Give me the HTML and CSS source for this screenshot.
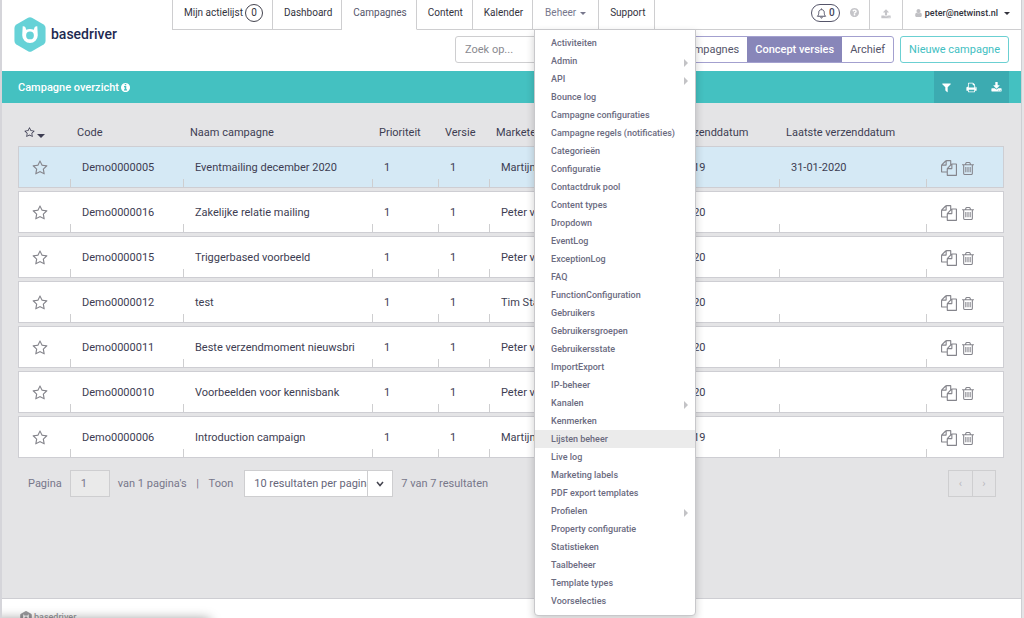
FILE: index.html
```html
<!DOCTYPE html>
<html lang="nl">
<head>
<meta charset="utf-8">
<title>Campagne overzicht - basedriver</title>
<link rel="stylesheet" href="styles.css">
</head>
<body>
<svg class="sprite" aria-hidden="true">
  <symbol id="star" viewBox="0 0 1792 1792"><path d="M1201 1004l306-297-422-62-189-382-189 382-422 62 306 297-73 421 378-199 377 199zm527-357q0 22-26 48l-363 354 86 500q1 7 1 20 0 50-41 50-19 0-40-12l-449-236-449 236q-22 12-40 12-21 0-31.5-14.5t-10.5-35.5q0-6 2-20l86-500-364-354q-25-27-25-48 0-37 56-46l502-73 225-455q19-41 49-41t49 41l225 455 502 73q56 9 56 46z"/></symbol>
  <symbol id="copy" viewBox="0 0 1792 1792"><path d="M1696 384q40 0 68 28t28 68v1216q0 40-28 68t-68 28h-960q-40 0-68-28t-28-68v-288h-544q-40 0-68-28t-28-68v-672q0-40 20-88t48-76l408-408q28-28 76-48t88-20h416q40 0 68 28t28 68v328q68-40 128-40h416zm-544 213l-299 299h299v-299zm-640-384l-299 299h299v-299zm196 647l316-316v-416h-384v416q0 40-28 68t-68 28h-416v640h512v-256q0-40 20-88t48-76zm956 804v-1152h-384v416q0 40-28 68t-68 28h-416v640h896z"/></symbol>
  <symbol id="trash" viewBox="192 128 1408 1536"><path d="M704 736v576q0 14-9 23t-23 9h-64q-14 0-23-9t-9-23v-576q0-14 9-23t23-9h64q14 0 23 9t9 23zm256 0v576q0 14-9 23t-23 9h-64q-14 0-23-9t-9-23v-576q0-14 9-23t23-9h64q14 0 23 9t9 23zm256 0v576q0 14-9 23t-23 9h-64q-14 0-23-9t-9-23v-576q0-14 9-23t23-9h64q14 0 23 9t9 23zm128 724v-948h-896v948q0 22 7 40.5t14.5 27 10.5 8.5h832q3 0 10.5-8.5t14.5-27 7-40.5zm-672-1076h448l-48-117q-7-9-17-11h-317q-10 2-17 11zm928 32v64q0 14-9 23t-23 9h-96v948q0 83-47 143.5t-113 60.5h-832q-66 0-113-58.5t-47-141.5v-952h-96q-14 0-23-9t-9-23v-64q0-14 9-23t23-9h309l70-167q15-37 54-63t79-26h320q40 0 79 26t54 63l70 167h309q14 0 23 9t9 23z"/></symbol>
  <symbol id="filter" viewBox="0 0 1792 1792"><path d="M1595 295q17 41-14 70l-493 493v742q0 42-39 59-13 5-25 5-27 0-45-19l-256-256q-19-19-19-45v-486l-493-493q-31-29-14-70 17-39 59-39h1280q42 0 59 39z"/></symbol>
  <symbol id="print" viewBox="0 0 1792 1792"><path d="M448 1536h896v-256h-896v256zm0-640h896v-384h-160q-40 0-68-28t-28-68v-160h-640v640zm1152 64q0-26-19-45t-45-19-45 19-19 45 19 45 45 19 45-19 19-45zm128 0v416q0 13-9.500 22.500t-22.500 9.500h-224v160q0 40-28 68t-68 28h-960q-40 0-68-28t-28-68v-160h-224q-13 0-22.500-9.500t-9.500-22.500v-416q0-79 56.500-135.500t135.500-56.500h64v-544q0-40 28-68t68-28h672q40 0 88 20t76 48l152 152q28 28 48 76t20 88v256h64q79 0 135.500 56.500t56.500 135.500z"/></symbol>
  <symbol id="download" viewBox="0 0 1792 1792"><path d="M1344 1344q0-26-19-45t-45-19-45 19-19 45 19 45 45 19 45-19 19-45zm256 0q0-26-19-45t-45-19-45 19-19 45 19 45 45 19 45-19 19-45zm128-224v320q0 40-28 68t-68 28h-1472q-40 0-68-28t-28-68v-320q0-40 28-68t68-28h465l135 136q58 56 136 56t136-56l136-136h464q40 0 68 28t28 68zm-325-569q17 41-14 70l-448 448q-18 19-45 19t-45-19l-448-448q-31-29-14-70 17-39 59-39h256v-448q0-26 19-45t45-19h256q26 0 45 19t19 45v448h256q42 0 59 39z"/></symbol>
  <symbol id="upload" viewBox="0 0 1792 1792"><path d="M1344 1472q0-26-19-45t-45-19-45 19-19 45 19 45 45 19 45-19 19-45zm256 0q0-26-19-45t-45-19-45 19-19 45 19 45 45 19 45-19 19-45zm128-224v320q0 40-28 68t-68 28h-1472q-40 0-68-28t-28-68v-320q0-40 28-68t68-28h427q21 56 70.500 92t110.500 36h256q61 0 110.500-36t70.500-92h427q40 0 68 28t28 68zm-325-648q-17 40-59 40h-256v448q0 26-19 45t-45 19h-256q-26 0-45-19t-19-45v-448h-256q-42 0-59-40-17-39 14-69l448-448q18-19 45-19t45 19l448 448q31 30 14 69z"/></symbol>
  <symbol id="info" viewBox="128 128 1536 1536"><path d="M1152 1376v-160q0-14-9-23t-23-9h-96v-512q0-14-9-23t-23-9h-320q-14 0-23 9t-9 23v160q0 14 9 23t23 9h96v320h-96q-14 0-23 9t-9 23v160q0 14 9 23t23 9h448q14 0 23-9t9-23zm-128-896v-160q0-14-9-23t-23-9h-192q-14 0-23 9t-9 23v160q0 14 9 23t23 9h192q14 0 23-9t9-23zm640 416q0 209-103 385.500t-279.500 279.500-385.500 103-385.500-103-279.500-279.500-103-385.500 103-385.500 279.500-279.500 385.500-103 385.500 103 279.500 279.500 103 385.500z"/></symbol>
  <symbol id="help" viewBox="128 128 1536 1536"><path d="M1024 1376v-192q0-14-9-23t-23-9h-192q-14 0-23 9t-9 23v192q0 14 9 23t23 9h192q14 0 23-9t9-23zm256-672q0-88-55.500-163t-138.500-116-170-41q-243 0-371 213-15 24 8 42l132 100q7 6 19 6 16 0 25-12 53-68 86-92 34-24 86-24 48 0 85.500 26t37.500 59q0 38-20 61t-68 45q-63 28-115.500 86.500t-52.500 125.500v36q0 14 9 23t23 9h192q14 0 23-9t9-23q0-19 21.500-49.500t54.500-49.500q32-18 49-28.500t46-35 44.500-48 28-60.500 12.500-81zm384 192q0 209-103 385.500t-279.500 279.500-385.500 103-385.500-103-279.500-279.500-103-385.500 103-385.500 279.500-279.500 385.500-103 385.500 103 279.500 279.500 103 385.500z"/></symbol>
  <symbol id="user" viewBox="256 128 1280 1536"><path d="M1536 1399q0 109-62.500 187t-150.500 78h-854q-88 0-150.500-78t-62.500-187q0-85 8.500-160.500t31.500-152 58.500-131 94-89 134.500-34.500q131 128 313 128t313-128q76 0 134.500 34.500t94 89 58.500 131 31.500 152 8.500 160.500zm-256-887q0 159-112.500 271.500t-271.500 112.500-271.500-112.500-112.500-271.500 112.500-271.500 271.500-112.500 271.500 112.500 112.500 271.500z"/></symbol>
  <symbol id="bell" viewBox="0 0 12 12"><path d="M1.500 9h9C9.300 8 9 6.500 9 4.800 9 3 7.800 1.800 6 1.800S3 3 3 4.800C3 6.500 2.700 8 1.500 9zM6 .5v1M5 10q.2 1 1 1t1-1" fill="none" stroke="currentColor" stroke-width="1"/></symbol>
  <symbol id="brand" viewBox="0 0 32 36"><path d="M14 .8q2-1.100 4 0l12 7q2 1.200 2 3.400v13.600q0 2.200-2 3.400l-12 7q-2 1.100-4 0l-12-7q-2-1.200-2-3.400V11.200q0-2.200 2-3.400z"/><path class="mark" fill-rule="evenodd" d="M8.500 9.500Q11.500 9 12 13q4-1.300 8 0 .5-4 3.500-3.500l.5 9.300a8 8 0 0 1-16 0zM16 15a4 4 0 1 0 0 8 4 4 0 1 0 0-8z"/></symbol>
</svg>

<div class="page">
  <header class="header">
    <a class="brand" href="#"><svg class="brand-icon"><use href="#brand"/></svg><span>basedriver</span></a>
    <div class="header-main">
      <nav class="nav">
        <a class="tab" href="#">Mijn actielijst <span class="count">0</span></a>
        <a class="tab" href="#">Dashboard</a>
        <a class="tab tab-active" href="#">Campagnes</a>
        <a class="tab" href="#">Content</a>
        <a class="tab" href="#">Kalender</a>
        <div class="dropdown">
          <a class="tab tab-open" href="#">Beheer <span class="caret"></span></a>
          <ul class="menu">
            <li><a href="#">Activiteiten</a></li>
            <li class="has-sub"><a href="#">Admin</a></li>
            <li class="has-sub"><a href="#">API</a></li>
            <li><a href="#">Bounce log</a></li>
            <li><a href="#">Campagne configuraties</a></li>
            <li><a href="#">Campagne regels (notificaties)</a></li>
            <li><a href="#">Categorieën</a></li>
            <li><a href="#">Configuratie</a></li>
            <li><a href="#">Contactdruk pool</a></li>
            <li><a href="#">Content types</a></li>
            <li><a href="#">Dropdown</a></li>
            <li><a href="#">EventLog</a></li>
            <li><a href="#">ExceptionLog</a></li>
            <li><a href="#">FAQ</a></li>
            <li><a href="#">FunctionConfiguration</a></li>
            <li><a href="#">Gebruikers</a></li>
            <li><a href="#">Gebruikersgroepen</a></li>
            <li><a href="#">Gebruikersstate</a></li>
            <li><a href="#">ImportExport</a></li>
            <li><a href="#">IP-beheer</a></li>
            <li class="has-sub"><a href="#">Kanalen</a></li>
            <li><a href="#">Kenmerken</a></li>
            <li class="current"><a href="#">Lijsten beheer</a></li>
            <li><a href="#">Live log</a></li>
            <li><a href="#">Marketing labels</a></li>
            <li><a href="#">PDF export templates</a></li>
            <li class="has-sub"><a href="#">Profielen</a></li>
            <li><a href="#">Property configuratie</a></li>
            <li><a href="#">Statistieken</a></li>
            <li><a href="#">Taalbeheer</a></li>
            <li><a href="#">Template types</a></li>
            <li><a href="#">Voorselecties</a></li>
          </ul>
        </div>
        <a class="tab" href="#">Support</a>
        <div class="nav-right">
          <button class="bell" aria-label="Meldingen"><svg><use href="#bell"/></svg>0</button>
          <button class="tool" aria-label="Help"><svg class="i9"><use href="#help"/></svg></button>
          <button class="tool tool-line" aria-label="Upload"><svg class="i10"><use href="#upload"/></svg></button>
          <a class="account" href="#"><svg><use href="#user"/></svg>peter@netwinst.nl <span class="caret"></span></a>
        </div>
      </nav>
      <div class="actions">
        <input class="search" type="search" placeholder="Zoek op..." aria-label="Zoeken">
        <div class="segments">
          <button>Campagnes</button><button class="selected">Concept versies</button><button>Archief</button>
        </div>
        <button class="new">Nieuwe campagne</button>
      </div>
    </div>
  </header>

  <div class="titlebar">
    <h1>Campagne overzicht <svg><use href="#info"/></svg></h1>
    <div class="tools">
      <button aria-label="Filter"><svg><use href="#filter"/></svg></button>
      <button aria-label="Afdrukken"><svg><use href="#print"/></svg></button>
      <button aria-label="Downloaden"><svg><use href="#download"/></svg></button>
    </div>
  </div>

  <main class="content">
    <table class="grid">
      <colgroup><col class="c-star"><col class="c-code"><col><col class="c-prio"><col class="c-vers"><col class="c-mark"><col class="c-first"><col class="c-last"><col class="c-act"></colgroup>
      <thead>
        <tr><th class="sort"><svg><use href="#star"/></svg><span class="caret"></span></th><th>Code</th><th>Naam campagne</th><th>Prioriteit</th><th>Versie</th><th>Marketeer</th><th>Eerste verzenddatum</th><th>Laatste verzenddatum</th><th></th></tr>
      </thead>
      <tbody>
        <tr class="active"><td class="fav"><svg><use href="#star"/></svg></td><td>Demo0000005</td><td>Eventmailing december 2020</td><td>1</td><td>1</td><td>Martijn</td><td>31-12-2019</td><td>31-01-2020</td><td class="ops"><button aria-label="Kopiëren"><svg class="i16"><use href="#copy"/></svg></button><button aria-label="Verwijderen"><svg class="i13"><use href="#trash"/></svg></button></td></tr>
        <tr><td class="fav"><svg><use href="#star"/></svg></td><td>Demo0000016</td><td>Zakelijke relatie mailing</td><td>1</td><td>1</td><td>Peter v</td><td>01-10-2020</td><td></td><td class="ops"><button aria-label="Kopiëren"><svg class="i16"><use href="#copy"/></svg></button><button aria-label="Verwijderen"><svg class="i13"><use href="#trash"/></svg></button></td></tr>
        <tr><td class="fav"><svg><use href="#star"/></svg></td><td>Demo0000015</td><td>Triggerbased voorbeeld</td><td>1</td><td>1</td><td>Peter v</td><td>01-10-2020</td><td></td><td class="ops"><button aria-label="Kopiëren"><svg class="i16"><use href="#copy"/></svg></button><button aria-label="Verwijderen"><svg class="i13"><use href="#trash"/></svg></button></td></tr>
        <tr><td class="fav"><svg><use href="#star"/></svg></td><td>Demo0000012</td><td>test</td><td>1</td><td>1</td><td>Tim Sta</td><td>01-10-2020</td><td></td><td class="ops"><button aria-label="Kopiëren"><svg class="i16"><use href="#copy"/></svg></button><button aria-label="Verwijderen"><svg class="i13"><use href="#trash"/></svg></button></td></tr>
        <tr><td class="fav"><svg><use href="#star"/></svg></td><td>Demo0000011</td><td>Beste verzendmoment nieuwsbri</td><td>1</td><td>1</td><td>Peter v</td><td>01-10-2020</td><td></td><td class="ops"><button aria-label="Kopiëren"><svg class="i16"><use href="#copy"/></svg></button><button aria-label="Verwijderen"><svg class="i13"><use href="#trash"/></svg></button></td></tr>
        <tr><td class="fav"><svg><use href="#star"/></svg></td><td>Demo0000010</td><td>Voorbeelden voor kennisbank</td><td>1</td><td>1</td><td>Peter v</td><td>01-10-2020</td><td></td><td class="ops"><button aria-label="Kopiëren"><svg class="i16"><use href="#copy"/></svg></button><button aria-label="Verwijderen"><svg class="i13"><use href="#trash"/></svg></button></td></tr>
        <tr><td class="fav"><svg><use href="#star"/></svg></td><td>Demo0000006</td><td>Introduction campaign</td><td>1</td><td>1</td><td>Martijn</td><td>31-12-2019</td><td></td><td class="ops"><button aria-label="Kopiëren"><svg class="i16"><use href="#copy"/></svg></button><button aria-label="Verwijderen"><svg class="i13"><use href="#trash"/></svg></button></td></tr>
      </tbody>
    </table>

    <div class="pager">
      <label for="page">Pagina</label>
      <input id="page" class="page-no" type="text" value="1">
      <span>van 1 pagina's</span>
      <span class="bar">|</span>
      <label for="size">Toon</label>
      <div class="select">
        <select id="size"><option>10 resultaten per pagina</option></select>
        <span class="arrow"><svg viewBox="0 0 8 6"><path d="M1 1l3 3.600L7 1"/></svg></span>
      </div>
      <span>7 van 7 resultaten</span>
      <div class="steps"><button disabled aria-label="Vorige">‹</button><button disabled aria-label="Volgende">›</button></div>
    </div>
  </main>

  <footer class="footer"><svg><use href="#brand"/></svg><span>basedriver</span></footer>
</div>
</body>
</html>
```
FILE: styles.css
```css
* { box-sizing: border-box; }
html, body { height: 100%; margin: 0; overflow: hidden; }
body { background: #e4e4e6; color: #3d3d52; font: 11px/16px Roboto, "Liberation Sans", sans-serif; }
button, input, select { font: inherit; color: inherit; margin: 0; }
button { background: none; border: 0; padding: 0; }
a { color: inherit; text-decoration: none; }
svg { fill: currentColor; display: block; }
.sprite { position: absolute; width: 0; height: 0; }
.caret { display: inline-block; border: 3px solid transparent; border-top-color: currentColor; border-bottom: 0; vertical-align: 2px; }

.page { height: 100%; margin-right: 2px; border-left: 2px solid #d5d5da; border-right: 1px solid #ceced3; display: flex; flex-direction: column; }
.header { background: #fff; display: flex; height: 71px; }
.brand { width: 170px; padding: 17px 0 0 12px; display: flex; gap: 5px; color: #1e2a52; font: 500 14px/34px Roboto, sans-serif; }
.brand-icon { width: 32px; height: 35px; color: #66d2d7; }
.mark { fill: #fff; }
.header-main { flex: 1; min-width: 0; }

.nav { display: flex; height: 30px; font-size: 10px; color: #33333d; border-left: 1px solid #ceced0; }
.tab { height: 30px; padding: 0 9px 3px 11px; display: flex; align-items: center; gap: 2px; border-right: 1px solid #ceced0; border-bottom: 1px solid #ceced0; white-space: nowrap; }
.tab-active { border-bottom-color: transparent; padding-bottom: 4px; color: #55556a; }
.tab-open { gap: 4px; padding-right: 12px; padding-left: 12px; color: #77778c; }
.count { width: 18px; height: 18px; border: 1px solid #44444f; border-radius: 50%; line-height: 16px; text-align: center; }
.dropdown { position: relative; }
.menu { position: absolute; z-index: 5; top: 29px; left: 1px; width: 162px; margin: 0; padding: 4px 0 5px; list-style: none; background: #fff; border: 1px solid #c8c8cb; border-radius: 0 0 4px 4px; box-shadow: 0 4px 9px rgba(0,0,0,.2); color: #6b6b7f; font-size: 9px; font-weight: 500; }
.menu li { display: flex; align-items: center; height: 18px; padding: 0 7px 0 16px; line-height: 18px; white-space: nowrap; }
.menu a { flex: 1; }
.menu .has-sub::after { content: ""; border: 4px solid transparent; border-left: 4px solid #c3c3c6; border-right: 0; margin-top: 4px; }
.menu .current { background: #ebebeb; }

.nav-right { flex: 1; display: flex; justify-content: flex-end; align-items: center; border-bottom: 1px solid #ceced0; }
.bell { width: 29px; height: 18px; margin-bottom: 3px; border: 1px solid #55556a; border-radius: 9px; display: flex; align-items: center; justify-content: center; gap: 2px; color: #44445a; font-weight: 500; }
.bell svg { width: 11px; height: 11px; }
.tool { width: 29px; height: 100%; padding-bottom: 4px; display: grid; place-items: center; color: #c5c5c9; }
.tool-line { width: 34px; padding-bottom: 2px; border: solid #ceced0; border-width: 0 1px; }
.i9 { width: 9px; height: 9px; }
.i10 { width: 10px; height: 10px; }
.account { display: flex; align-items: center; gap: 3px; height: 100%; padding: 0 11px 3px 12px; font-size: 9px; font-weight: 500; }
.account .caret { margin-left: 3px; }
.account svg { width: 7px; height: 8px; color: #c0c0c4; }

.actions { display: flex; justify-content: flex-end; padding: 6px 12px 0 0; }
.search { width: 190px; height: 27px; border: 1px solid #ceced0; border-radius: 3px; padding: 0 9px; margin-right: auto; margin-left: 283px; background: #fff; }
.search::placeholder { color: #8a8a90; opacity: 1; }
.segments { display: flex; height: 27px; border: 1px solid #a3a0cf; border-radius: 3px; overflow: hidden; margin-right: 6px; color: #55556a; }
.segments button { padding: 0 8px; }
.segments .selected { background: #8886b9; color: #fff; font-weight: 500; }
.new { height: 27px; padding: 0 8px; border: 1px solid #6bd0d2; border-radius: 3px; color: #3fc0c2; }

.titlebar { height: 32px; background: #44c1c1; color: #fff; display: flex; justify-content: space-between; padding: 0 12px 0 16px; }
.titlebar h1 { margin: 0; font-size: 11px; font-weight: 500; display: flex; align-items: center; gap: 2px; padding-top: 1px; }
.titlebar h1 svg { width: 9px; height: 9px; }
.tools { display: flex; background: #3cabb1; }
.tools button { width: 25px; display: grid; place-items: center; }
.tools svg { width: 11px; height: 11px; }

.content { flex: 1; padding: 0 17px 0 16px; }
.grid { width: 100%; table-layout: fixed; border-spacing: 0 3px; margin-top: -3px; }
.c-star { width: 52px; } .c-code { width: 113px; } .c-prio { width: 66px; } .c-vers { width: 51px; }
.c-mark { width: 149px; } .c-first { width: 141px; } .c-last { width: 147px; } .c-act { width: 78px; }
.grid th { height: 40px; padding: 19px 0 0 7px; text-align: left; font-weight: 400; white-space: nowrap; }
.grid .sort { padding-left: 6px; }
.sort svg { display: inline-block; width: 11px; height: 11px; vertical-align: -2px; margin-right: 2px; }
.sort .caret { border-width: 4px 4px 0; vertical-align: -2px; }
.grid td { height: 42px; padding: 2px 0 0 12px; white-space: nowrap; border: solid #ceced3; border-width: 1px 0; background: linear-gradient(#ceced0, #ceced0) left bottom / 1px 8px no-repeat #fff; }
.grid .active td { background-color: #d5e9f5; }
.grid td:first-child { padding-left: 11px; border-left-width: 1px; background-image: none; }
.grid td:last-child { border-right-width: 1px; }
.fav svg { width: 16px; height: 16px; margin-left: 2px; color: #85858c; }
.ops button { display: inline-block; vertical-align: middle; color: #85858c; }
.grid .ops { padding-left: 15px; }
.ops button + button { margin-left: 5px; }
.i16 { width: 16px; height: 16px; }
.i13 { width: 12px; height: 13px; }

.pager { display: flex; align-items: center; gap: 8px; padding: 9px 8px 0 10px; color: #77778a; }
.page-no { width: 40px; height: 27px; border: 1px solid #ceced0; background: #eaeaea; padding: 0 10px; }
.bar { width: 6px; text-align: center; }
.select { position: relative; width: 149px; margin-left: 3px; color: #66667a; }
.select select { appearance: none; display: block; width: 100%; height: 27px; border: 1px solid #ceced0; border-radius: 0; background: #fff; padding: 0 25px 0 9px; }
.arrow { position: absolute; top: 1px; right: 1px; bottom: 1px; width: 25px; background: #fff; border-left: 1px solid #ceced0; display: grid; place-items: center; pointer-events: none; }
.arrow svg { width: 8px; height: 6px; fill: none; stroke: #44444f; stroke-width: 1.5; }
.steps { display: flex; margin-left: auto; border: 1px solid #ceced0; color: #b9b9be; }
.steps button { width: 23px; height: 25px; color: inherit; }
.steps button + button { border-left: 1px solid #ceced0; }

.footer { position: relative; height: 20px; background: #fff; border-top: 1px solid #ceced3; display: flex; gap: 2px; padding: 12px 18px 0; overflow: hidden; color: #99999c; font: 500 9px/12px Roboto, sans-serif; }
.footer svg { width: 12px; height: 13px; flex: none; }
.footer::after { content: ""; position: absolute; left: -10px; top: 20px; width: 218px; height: 20px; box-shadow: 0 0 12px rgba(0,0,0,.4); }
```
